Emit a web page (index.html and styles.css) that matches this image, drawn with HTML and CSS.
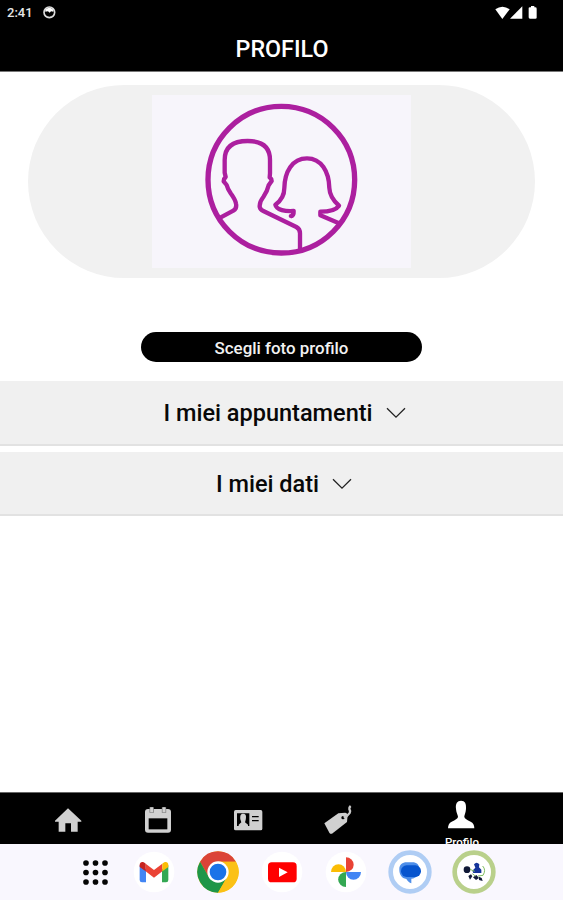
FILE: index.html
```html
<!DOCTYPE html>
<html lang="it">
<head>
<meta charset="utf-8">
<title>Profilo</title>
<link rel="stylesheet" href="styles.css">
</head>
<body>
<header class="top">
  <div class="status">
    <span class="clock">2:41</span>
    <svg class="face" viewBox="0 0 39 39"><circle cx="19" cy="19" r="16" fill="none" stroke="#ddd" stroke-width="5"/><path d="M7 17V11Q19-1 31 11V17L24 16 20 20 15 16Z" fill="#fff"/><path d="M10 28Q19 38 28 28L24 33H14Z" fill="#ddd"/></svg>
    <svg class="signals" viewBox="0 0 129 42"><path d="M1 10Q22-5 44 10L22 39Z" fill="#fff"/><path d="M82 1V38H45Z" fill="#fff"/><path d="M101 6Q101 4 105 4H108V0H118V4H121Q125 4 125 8V35Q125 38 121 38H105Q101 38 101 34Z" fill="#fff"/></svg>
  </div>
  <h1 class="title">PROFILO</h1>
</header>
<main class="content">
  <div class="photo">
    <svg class="portrait" viewBox="-114 15 777 519" fill="none" stroke="#ac1f9f" stroke-width="13" stroke-linejoin="round">
      <circle cx="274" cy="269" r="220" stroke-width="16"/>
      <path d="M91 383L130 362Q141 355 138 341Q136 329 122 310Q113 297 110 285L101 274Q101 266 107 261L104 248V210Q104 153 173 153Q240 153 240 210V250L239 262Q245 266 245 273L236 286Q232 304 220 321Q208 336 209 350Q211 359 220 363L319 411Q330 417 330 430V478"/>
      <path d="M302 379Q312 378 311 363C287 365 259 360 256 344C272 333 283 318 283 294C284 246 306 205 351 205C394 205 417 245 418 294C419 318 431 333 447 347C438 360 417 365 391 365V376L447 400"/>
      <circle cx="302" cy="378" r="3" stroke-width="6"/>
    </svg>
  </div>
  <button class="choose">Scegli foto profilo</button>
  <section class="panel first"><span>I miei appuntamenti</span><svg class="chevron" viewBox="0 0 20 12"><path d="M1 1.2L10 10.2 19 1.2"/></svg></section>
  <section class="panel second"><span>I miei dati</span><svg class="chevron" viewBox="0 0 20 12"><path d="M1 1.2L10 10.2 19 1.2"/></svg></section>
</main>
<nav class="tabs">
  <div class="tab"><svg viewBox="159 75 90 90" fill="#d0d0d0"><path d="M204 85L244 122V125H233V155H213V130H196V155H176V125H165V122Z"/></svg></div>
  <div class="tab"><svg viewBox="429 75 90 90"><path d="M444 87H504Q513 87 513 96V149Q513 158 504 158H444Q435 158 435 149V96Q435 87 444 87Z" fill="#d0d0d0"/><path d="M446 115H502V148H446Z" fill="#000"/><path d="M455 82V98M492 82V98" stroke="#777" stroke-width="13"/><path d="M455 82V97M492 82V97" stroke="#d0d0d0" stroke-width="9"/></svg></div>
  <div class="tab"><svg viewBox="159 75 90 90"><rect x="162" y="90" width="85" height="61" rx="5" fill="#d0d0d0"/><path d="M171 100H208V138H171ZM216 108H236V112H216ZM216 120H236V124H216Z" fill="#000"/><path d="M189 101C199 101 199 109 197 120L195 127 204 134V138H176V134L184 127 181 118C180 108 181 101 189 101Z" fill="#d0d0d0"/></svg></div>
  <div class="tab"><svg viewBox="429 75 90 90"><path d="M433 130L475 100 496 98Q502 99 503 105L501 126 456 161Q451 163 448 158Z" fill="#d0d0d0"/><circle cx="489" cy="113" r="5" fill="#000"/><path d="M491 112Q503 109 509 99Q512 93 508 87Q507 82 512 78" fill="none" stroke="#c8c8c8" stroke-width="7"/></svg></div>
  <div class="tab active"><svg viewBox="230 55 90 90" fill="#fff"><path d="M275 60C287 60 291 68 290 84C289 98 285 102 285 109Q287 116 304 123Q315 128 315 143H236Q236 128 247 123Q264 116 266 109C266 102 261 98 260 84C258 68 264 60 275 60Z"/></svg><span>Profilo</span></div>
</nav>
<footer class="dock">
  <svg class="apps" viewBox="0 0 75 75"><g fill="#050505"><circle cx="9" cy="9" r="8.5"/><circle cx="37.500" cy="9" r="8.500"/><circle cx="66" cy="9" r="8.500"/><circle cx="9" cy="37.500" r="8.500"/><circle cx="37.500" cy="37.500" r="8.500"/><circle cx="66" cy="37.500" r="8.500"/><circle cx="9" cy="66" r="8.500"/><circle cx="37.500" cy="66" r="8.500"/><circle cx="66" cy="66" r="8.500"/></g></svg>
  <svg class="app" viewBox="-66 -66 132 132"><circle r="61" fill="#fff"/><path d="M-43-20L-24-8V31H-36Q-43 31-43 24Z" fill="#4285f4"/><path d="M43-20L24-8V31H36Q43 31 43 24Z" fill="#34a853"/><path d="M-25-25L0-6 25-25V-2L0 17-25-2Z" fill="#ea4335"/><path d="M-25-25V-2L-43-15V-20C-43-32-32-32-25-25Z" fill="#c5221f"/><path d="M25-25V-2L43-15V-20C43-32 32-32 25-25Z" fill="#fbbc04"/></svg>
  <svg class="app" viewBox="-66 -66 132 132"><circle r="62" fill="#fbc116"/><path d="M-53.700-31A62 62 0 0 1 53.700-31L0-31-27 16Z" fill="#db4437"/><path d="M-53.700-31A62 62 0 0 0 0 62L27 16-27 16Z" fill="#1e9648"/><path d="M53.700-31H0L27 16 0 62A62 62 0 0 0 53.700-31Z" fill="#fbc116"/><circle r="32" fill="#fff"/><circle r="25" fill="#1a73e8"/></svg>
  <svg class="app" viewBox="-66 -66 132 132"><circle r="61" fill="#fff"/><rect x="-42" y="-29" width="86" height="60" rx="11" fill="#f00"/><path d="M-9-13L17 1-9 15Z" fill="#fff"/></svg>
  <svg class="app" viewBox="-66 -66 132 132"><circle r="61" fill="#fff"/><path d="M0 0V-44A23 22 0 0 1 0 0Z" fill="#e94335"/><path d="M0 0H45A22 23 0 0 1 0 0Z" fill="#4285f4"/><path d="M0 0V45A23 22 0 0 1 0 0Z" fill="#34a853"/><path d="M0 0H-45A22 23 0 0 1 0 0Z" fill="#fbbc04"/></svg>
  <svg class="app" viewBox="-66 -66 132 132"><circle r="58" fill="#fff" stroke="#afcdf4" stroke-width="14"/><path d="M-32-8C-32-22-23-29-10-29H7C20-29 28-22 28-8C28 8 20 20 4 20V34C-2 32-7 27-11 21C-25 19-32 8-32-8Z" fill="#4d8ee9"/><rect x="-27" y="-20" width="60" height="35" rx="17" fill="#0755ce"/></svg>
  <svg class="app" viewBox="-66 -66 132 132"><circle r="58" fill="#fff" stroke="#b9d08b" stroke-width="14"/><circle cx="-21" cy="-7" r="10" fill="#101936"/><path d="M0-23Q8-32 16-23L15-14 22-7 22 3H-2L-5-4 4-13Z" fill="#14349a"/><path d="M-17 12L-9 7-5 13-12 23ZM-3 16L7 9 15 18 6 24ZM15 14L23 18 26 27 15 24Z" fill="#101936"/><path d="M-12-8L2-2M26-18Q37-6 27 10L12 12M-5 5L4 12" fill="none" stroke="#80bd62" stroke-width="3"/></svg>
</footer>
</body>
</html>
```
FILE: styles.css
```css
* { box-sizing: border-box; }
body {
  margin: 0;
  height: 900px;
  display: flex;
  flex-direction: column;
  overflow: hidden;
  background: #fff;
  color: #080808;
  font-family: Roboto, "Liberation Sans", sans-serif;
}
svg { display: block; flex: none; }
.top {
  height: 72px;
  background: #000;
  border-bottom: 1px solid #777;
  color: #fff;
}
.status {
  height: 25px;
  display: flex;
  align-items: center;
  padding: 0 25px 0 7px;
}
.clock { width: 36px; font-size: 13px; font-weight: 500; color: #e6e6e6; }
.face { width: 13px; height: 13px; }
.signals { width: 43px; height: 14px; margin-left: auto; }
.title {
  margin: 0;
  padding-left: 1px;
  text-align: center;
  font-size: 23.3px;
  line-height: 48px;
  font-weight: 500;
}
.content { flex: 1; display: flex; flex-direction: column; }
.photo {
  width: 507px;
  height: 193px;
  margin: 12px 0 0 28px;
  padding: 10px 0 0 124px;
  border-radius: 97px;
  background: #f1f1f1;
}
.top + .content { padding-top: 1px; }
.portrait { width: 259px; height: 173px; background: #f7f5fb; }
.choose {
  width: 281px;
  height: 30px;
  margin: 54px 0 19px 141px;
  padding: 1px 0 0;
  border: 0;
  border-radius: 15px;
  background: #000;
  color: #f2f2f2;
  font: 500 16.9px Roboto, sans-serif;
}
.panel {
  height: 65px;
  display: flex;
  align-items: center;
  justify-content: center;
  gap: 13px;
  border-bottom: 2px solid #e2e2e2;
  background: #f0f0f0;
  font-size: 23.5px;
  font-weight: 500;
}
.first { padding-left: 6px; }
.second { height: 64px; margin-top: 6px; padding: 2px 0 0 5px; }
.chevron { width: 20px; height: 12px; fill: none; stroke: #222; stroke-width: 1.3; }
.tabs {
  height: 52px;
  display: grid;
  grid-template-columns: repeat(4, 90px) 156px;
  padding: 0 24px 0 23px;
  border-top: 1px solid #666;
  background: #000;
  overflow: hidden;
}
.tab { display: flex; flex-direction: column; align-items: center; padding-top: 12px; }
.tab svg { width: 30px; height: 30px; }
.active { padding-top: 6px; color: #fff; font-size: 11.5px; font-weight: 500; line-height: 13px; }
.active span { margin: 7px 0 0 2px; }
.dock {
  height: 56px;
  display: grid;
  grid-template-columns: 54px repeat(6, 64px);
  place-items: center;
  padding-left: 68px;
  justify-content: start;
  background: #f9f7fe;
}
.apps { width: 25px; height: 25px; }
.app { width: 44px; height: 44px; }
```
